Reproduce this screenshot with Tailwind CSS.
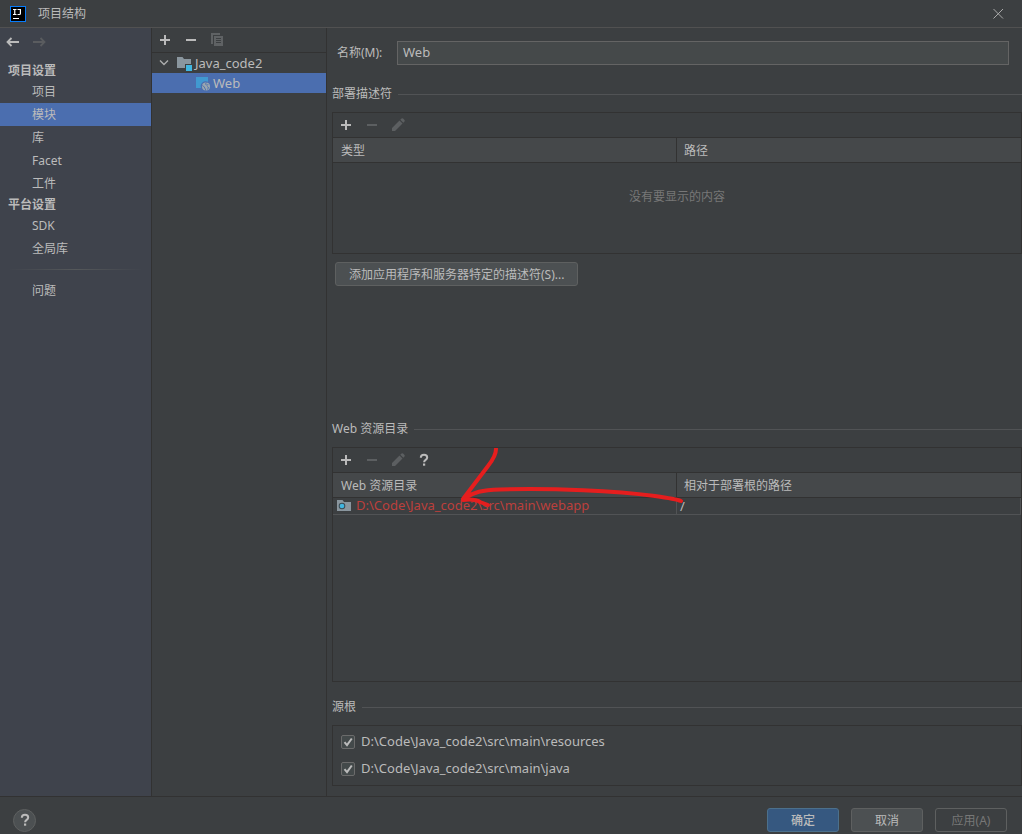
<!DOCTYPE html>
<html lang="zh-CN">
<head>
<meta charset="utf-8">
<meta name="viewport" content="width=device-width, initial-scale=1">
<title>项目结构</title>
<script src="https://cdn.jsdelivr.net/npm/@tailwindcss/browser@4"></script>
</head>
<body class="flex min-h-screen flex-col bg-[#3c3f41] font-['Noto_Sans','Noto_Sans_CJK_SC',sans-serif] text-xs text-[#bbbbbb]">

<svg class="hidden" aria-hidden="true">
  <symbol id="plus" viewBox="0 0 16 16"><path d="M7 3h2v4h4v2H9v4H7V9H3V7h4z" fill="currentColor"/></symbol>
  <symbol id="minus" viewBox="0 0 16 16"><path d="M3 7h10v2H3z" fill="currentColor"/></symbol>
  <symbol id="pencil" viewBox="0 0 16 16"><path d="M2 14v-3l7.500-7.500 3 3L5 14zM10.300 2.700l1.200-1.200q.8-.6 1.600 0l1.400 1.400q.6.8 0 1.600l-1.200 1.200z" fill="currentColor"/></symbol>
  <symbol id="question" viewBox="0 0 16 16"><path d="M4.800 5.800C4.800 3.800 6 2.800 8 2.800s3.200 1 3.200 2.700c0 2.400-3.100 2.300-3.100 4.700" fill="none" stroke="currentColor" stroke-width="2"/><path d="M7 11.500h2.200v2.200H7z" fill="currentColor"/></symbol>
  <symbol id="check" viewBox="0 0 14 14"><path d="M3.500 7.200l2.500 3L10.800 3.500" fill="none" stroke="currentColor" stroke-width="2"/></symbol>
</svg>

<header class="flex h-7 shrink-0 items-center border-b border-[#515151] pl-2.5 pr-4">
  <svg class="size-4" viewBox="0 0 16 16" aria-hidden="true"><path d="M0 0h16v16H0z" fill="#087cfa"/><path d="M1 1h14v14H1z" fill="#000"/><path d="M3 3.500h3.500M4.750 3v6M3 8.500h3.500M7.500 3.500h3.500M10.400 3v4.500q0 1-1 1H7.500" fill="none" stroke="#fff" stroke-width="1.200"/><path d="M3 12h6v1H3z" fill="#fff"/></svg>
  <h1 class="ml-3 flex-1">项目结构</h1>
  <button aria-label="关闭" class="flex size-4 items-center justify-center"><svg class="size-4" viewBox="0 0 16 16"><path d="M3.500 3l9.500 9.500M13 3L3.500 12.500" stroke="#aaa" stroke-width="1"/></svg></button>
</header>

<div class="flex flex-1">
  <nav class="flex w-38 shrink-0 flex-col border-r border-[#323232] bg-[#3f434c]">
    <div class="flex h-[33px] gap-2.5 px-1 pt-1.5">
      <button aria-label="后退" class="size-4"><svg class="size-4" viewBox="0 0 16 16"><path d="M15 8H3.500M7.500 4L3.500 8l4 4" fill="none" stroke="#bbb" stroke-width="1.800"/></svg></button>
      <button aria-label="前进" disabled class="ml-0.5 size-4"><svg class="size-4" viewBox="0 0 16 16"><path d="M1 8h11.500M8.500 4l4 4-4 4" fill="none" stroke="#5a5c5f" stroke-width="1.800"/></svg></button>
    </div>
    <h2 class="flex h-[19px] items-center pl-2 font-bold">项目设置</h2>
    <a href="#" class="flex h-[23px] items-center pl-8">项目</a>
    <a href="#" aria-current="page" class="flex h-[23px] items-center bg-[#4b6eaf] pl-8">模块</a>
    <a href="#" class="flex h-[23px] items-center pl-8">库</a>
    <a href="#" class="flex h-[23px] items-center pl-8">Facet</a>
    <a href="#" class="flex h-[23px] items-center pl-8">工件</a>
    <h2 class="flex h-[19px] items-center pl-2 font-bold">平台设置</h2>
    <a href="#" class="flex h-[23px] items-center pl-8">SDK</a>
    <a href="#" class="flex h-[23px] items-center pl-8">全局库</a>
    <div class="mx-2 my-[9px] h-px bg-linear-to-r from-transparent via-[#55585a] to-transparent"></div>
    <a href="#" class="flex h-[23px] items-center pl-8">问题</a>
  </nav>

  <section aria-label="模块" class="flex w-[175px] shrink-0 flex-col border-r border-[#323232]">
    <div class="flex h-[25px] items-center gap-2.5 border-b border-[#323232] pl-[5px]">
      <button aria-label="添加" class="size-4"><svg class="size-4"><use href="#plus"/></svg></button>
      <button aria-label="移除" class="size-4"><svg class="size-4"><use href="#minus"/></svg></button>
      <button aria-label="复制" disabled class="size-4"><svg class="size-4" viewBox="0 0 16 16"><path d="M2 1h9v2H4v9H2z" fill="#5f6264"/><path d="M5 4h9v10H5z" fill="#5f6264"/><path d="M7 6.500h5M7 8.500h5M7 10.500h5" stroke="#3c3f41"/></svg></button>
    </div>
    <ul class="text-[13px] leading-5">
      <li class="flex h-5 items-center pl-1">
        <svg class="size-4" viewBox="0 0 16 16" aria-hidden="true"><path d="M4 5.500l4 4 4-4" fill="none" stroke="#adadad" stroke-width="1.400"/></svg>
        <svg class="ml-1 size-4" viewBox="0 0 16 16" aria-hidden="true"><path d="M1 2h5.500L8 4h7v5H9v4H1z" fill="#8a969e"/><path d="M10 10h6v6h-6z" fill="#40b6e0"/></svg>
        <span class="ml-[3px]">Java_code2</span>
      </li>
      <li class="flex h-5 items-center bg-[#4b6eaf] pl-[43px]">
        <svg class="size-4" viewBox="0 0 16 16" aria-hidden="true"><path d="M1 2h12v4.800A5 5 0 0 0 6 13H1z" fill="#4199d0"/><circle cx="11" cy="11.500" r="4" fill="#9aa7b0"/><path d="M7.300 10.500l2.200 1.500v1l1 1v1.500M11.500 7.500l-1 1.500 1 1.200 1.800-.6M12.500 14.500l1-2-1.500-1" fill="none" stroke="#4b6eaf" stroke-width=".9"/></svg>
        <span class="ml-0.5">Web</span>
      </li>
    </ul>
  </section>

  <main class="flex min-w-0 flex-1 flex-col pb-2.5 pl-[5px]">
    <div class="flex items-center pl-[5px] pr-[13px] pt-[13px]">
      <label for="name" class="w-[60px]">名称(M):</label>
      <input id="name" value="Web" class="h-6 min-w-0 flex-1 border border-[#646464] bg-[#45494a] px-[5px] pb-0.5 text-[13px] outline-none">
    </div>

    <h2 class="mt-5 flex h-[18px] items-center gap-1.5 after:h-px after:flex-1 after:bg-[#515355]">部署描述符</h2>
    <div class="mt-[9px] flex h-[142px] flex-col border border-[#323232]">
      <div class="flex h-6 shrink-0 items-center gap-2.5 pl-[5px]">
        <button aria-label="添加描述符" class="size-4"><svg class="size-4"><use href="#plus"/></svg></button>
        <button aria-label="移除描述符" disabled class="size-4 text-[#5c5f61]"><svg class="size-4"><use href="#minus"/></svg></button>
        <button aria-label="编辑描述符" disabled class="size-4 text-[#5c5f61]"><svg class="size-4"><use href="#pencil"/></svg></button>
      </div>
      <table class="w-full table-fixed border-separate border-spacing-0">
        <thead class="bg-[#45484a] text-left">
          <tr>
            <th class="h-[26px] w-[calc(50%+1px)] border-y border-r border-[#323232] px-2 pt-0.5 pb-0 font-normal leading-4">类型</th>
            <th class="h-[26px] border-y border-[#323232] px-[7px] pt-0.5 pb-0 font-normal leading-4">路径</th>
          </tr>
        </thead>
        <tbody>
          <tr><td colspan="2" class="h-[68px] text-center text-[#777777]">没有要显示的内容</td></tr>
        </tbody>
      </table>
    </div>
    <button class="ml-[3px] mt-2 h-6 self-start rounded-[3px] border border-[#5e6060] bg-[#4c5052] px-[13px] pt-0.5 leading-4">添加应用程序和服务器特定的描述符(S)...</button>

    <div class="min-h-4 flex-1"></div>

    <h2 class="flex h-[18px] items-center gap-1.5 after:h-px after:flex-1 after:bg-[#515355]">Web 资源目录</h2>
    <div class="relative mt-[9px] flex h-[235px] flex-col border border-[#323232]">
      <div class="flex h-6 shrink-0 items-center gap-2.5 pl-[5px]">
        <button aria-label="添加目录" class="size-4"><svg class="size-4"><use href="#plus"/></svg></button>
        <button aria-label="移除目录" disabled class="size-4 text-[#5c5f61]"><svg class="size-4"><use href="#minus"/></svg></button>
        <button aria-label="编辑目录" disabled class="size-4 text-[#5c5f61]"><svg class="size-4"><use href="#pencil"/></svg></button>
        <button aria-label="目录帮助" class="size-4"><svg class="size-4"><use href="#question"/></svg></button>
      </div>
      <table class="w-full table-fixed border-separate border-spacing-0">
        <thead class="bg-[#45484a] text-left">
          <tr>
            <th class="h-[26px] w-[calc(50%+1px)] border-y border-r border-[#323232] px-2 pt-0.5 pb-0 font-normal leading-4">Web 资源目录</th>
            <th class="h-[26px] border-y border-[#323232] px-[7px] pt-0.5 pb-0 font-normal leading-4">相对于部署根的路径</th>
          </tr>
        </thead>
        <tbody class="text-[13px]">
          <tr>
            <td class="h-[17px] border-b border-r border-[#515355] p-0 pl-[3px]">
              <span class="flex h-4 items-center gap-1 text-[#bc3f3c]">
                <svg class="size-4" viewBox="0 0 16 16" aria-hidden="true"><path d="M1 2h5.500L8 4h7v9H1z" fill="#8a969e"/><circle cx="6" cy="8" r="3.300" fill="#3c4a52"/><circle cx="6" cy="8" r="2.300" fill="#40b6e0"/></svg>
                D:\Code\Java_code2\src\main\webapp
              </span>
            </td>
            <td class="h-[17px] border-b border-r border-[#515355] p-0 pl-[3px] leading-4">/</td>
          </tr>
        </tbody>
      </table>
      <svg class="pointer-events-none absolute left-[127px] top-0 h-16 w-[226px]" viewBox="0 0 226 64" fill="none" stroke="#e61e1e" stroke-width="4" stroke-linecap="round" stroke-linejoin="round" aria-hidden="true">
        <path d="M36 1C36 6 32 13 28 18L3 51C14 44 22 42 40 41.500C95 40 155 43 195 48C209 50 216 51 221 53"/>
        <path d="M3 52C12 51 17 52 20 54L28 57"/>
      </svg>
    </div>

    <h2 class="mt-4 flex h-[18px] items-center gap-1.5 after:h-px after:flex-1 after:bg-[#515355]">源根</h2>
    <div class="mt-[9px] flex flex-col gap-[9px] border border-[#323232] px-2 py-[7px] text-[13px]">
      <label class="flex h-[18px] items-center gap-1.5">
        <span class="grid size-3.5">
          <input type="checkbox" checked class="peer col-start-1 row-start-1 size-3.5 appearance-none rounded-[2px] border border-[#6b6b6b] bg-[#43494a]">
          <svg class="pointer-events-none invisible col-start-1 row-start-1 size-3.5 peer-checked:visible"><use href="#check"/></svg>
        </span>
        D:\Code\Java_code2\src\main\resources
      </label>
      <label class="flex h-[18px] items-center gap-1.5">
        <span class="grid size-3.5">
          <input type="checkbox" checked class="peer col-start-1 row-start-1 size-3.5 appearance-none rounded-[2px] border border-[#6b6b6b] bg-[#43494a]">
          <svg class="pointer-events-none invisible col-start-1 row-start-1 size-3.5 peer-checked:visible"><use href="#check"/></svg>
        </span>
        D:\Code\Java_code2\src\main\java
      </label>
    </div>
  </main>
</div>

<footer class="flex shrink-0 items-center gap-3 border-t border-[#323232] pb-0.5 pl-[13px] pr-[15px] pt-[11px]">
  <button aria-label="帮助" class="mr-auto flex size-[23px] items-center justify-center rounded-full border border-[#5e6060] bg-[#4c5052]"><svg class="size-4"><use href="#question"/></svg></button>
  <button class="h-6 w-18 rounded-[3px] border border-[#4c708c] bg-[#365880] pt-0.5 leading-4 font-medium">确定</button>
  <button class="h-6 w-18 rounded-[3px] border border-[#5e6060] bg-[#4c5052] pt-0.5 leading-4">取消</button>
  <button disabled class="h-6 w-18 rounded-[3px] border border-[#5e6060] pt-0.5 leading-4 text-[#777777]">应用(A)</button>
</footer>
</body>
</html>
